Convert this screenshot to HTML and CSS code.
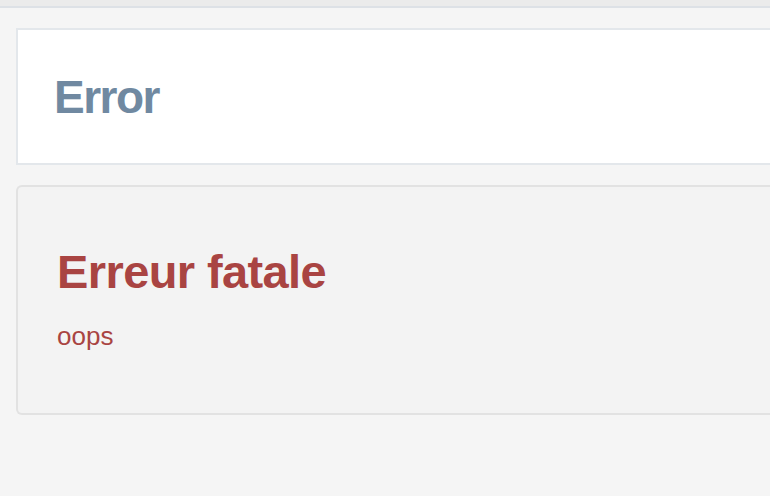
FILE: index.html
```html
<!DOCTYPE html>
<html>
<head>
<meta charset="utf-8">
<link rel="stylesheet" href="styles.css">
</head>
<body>
<div class="topbar"></div>
<main class="page">
  <header class="title-box">
    <h1 class="title">Error</h1>
  </header>
  <section class="alert">
    <h2 class="alert-title">Erreur fatale</h2>
    <p class="alert-text">oops</p>
  </section>
</main>
</body>
</html>
```
FILE: styles.css
```css
html, body {
  margin: 0;
  padding: 0;
}
body {
  background: #f5f5f5;
  font-family: "Liberation Sans", Arial, sans-serif;
  width: 770px;
  height: 496px;
  overflow: hidden;
}
.topbar {
  height: 6px;
  background: #ebebeb;
  border-bottom: 2px solid #dde1e6;
}
.page {
  padding: 20px 0 0 16px;
}
.title-box {
  background: #ffffff;
  border: 2px solid #e3e7eb;
  border-right: none;
  height: 133px;
  display: flex;
  align-items: center;
  padding-left: 36px;
}
.title {
  margin: 0;
  font-size: 46px;
  font-weight: bold;
  color: #7089a1;
  letter-spacing: -1.5px;
}
.alert {
  margin-top: 20px;
  background: #f3f3f3;
  border: 2px solid #e2e2e2;
  border-right: none;
  border-radius: 6px 0 0 6px;
  height: 226px;
  padding: 0 0 0 39px;
}
.alert-title {
  margin: 0;
  padding-top: 57px;
  font-size: 47px;
  line-height: 56px;
  font-weight: bold;
  color: #a94442;
  letter-spacing: -0.6px;
}
.alert-text {
  margin: 21px 0 0;
  font-size: 26px;
  line-height: 30px;
  color: #a94442;
}
```
